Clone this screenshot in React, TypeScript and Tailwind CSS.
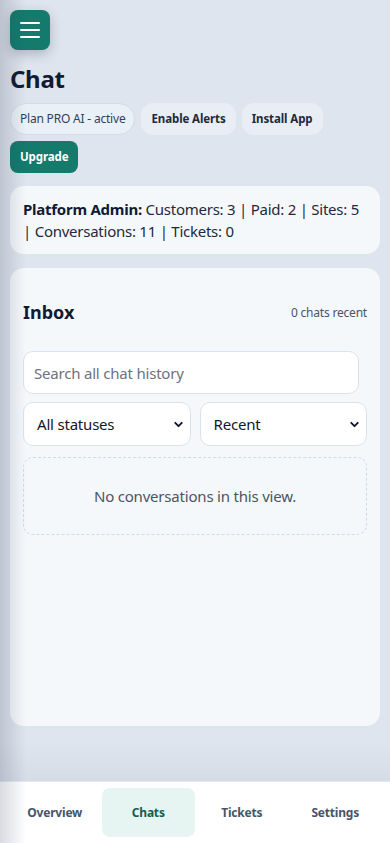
import { ChevronDown } from "lucide-react";

const tabs = ["Overview", "Chats", "Tickets", "Settings"];

export default function App() {
  return (
    <div
      className="relative flex h-[843px] flex-col overflow-hidden bg-[#dfe5ee] text-[#0f1b33]"
      style={{ fontFamily: '"Noto Sans", "Open Sans", sans-serif' }}
    >
      {/* main column */}
      <div className="flex-1 px-[10px] pt-[10px]">
        <button className="flex h-10 w-10 flex-col items-center justify-center gap-[5px] rounded-lg bg-[#137a6c] shadow-[0_4px_12px_rgba(15,40,60,0.25)]">
          <span className="h-[2px] w-5 rounded bg-white" />
          <span className="h-[2px] w-5 rounded bg-white" />
          <span className="h-[2px] w-5 rounded bg-white" />
        </button>

        <h1 className="mt-[14px] text-[24px] leading-[30px] font-bold tracking-[-0.3px]">Chat</h1>

        <div className="mt-[9px] flex flex-wrap gap-[6px]">
          <span className="flex h-8 items-center rounded-full border border-[#d3dbe6] bg-[#eaf0f7] px-[9px] text-[12px] tracking-[-0.2px] text-[#334155]">
            Plan PRO AI - active
          </span>
          <button className="h-8 rounded-xl bg-[#e9eef6] px-[10px] text-[11.5px] font-bold tracking-[-0.1px] text-[#1e293b]">
            Enable Alerts
          </button>
          <button className="h-8 rounded-xl bg-[#e9eef6] px-[10px] text-[11.5px] font-bold tracking-[-0.1px] text-[#1e293b]">
            Install App
          </button>
          <button className="h-8 rounded-lg bg-[#137a6c] px-[10px] text-[11.5px] font-bold tracking-[-0.1px] text-white">
            Upgrade
          </button>
        </div>

        <div className="mt-[13px] rounded-[14px] bg-[#f5f8fb] px-[13px] py-[12px] text-[15px] leading-[22px] tracking-[-0.25px] text-[#1e293b]">
          <span className="font-bold text-[#0f1b33]">Platform Admin:</span> Customers: 3 | Paid: 2 | Sites: 5 |
          Conversations: 11 | Tickets: 0
        </div>

        <div className="mt-[14px] h-[458px] rounded-[14px] bg-[#f5f8fb] px-[13px] pt-[31px]">
          <div className="flex items-center justify-between">
            <h2 className="text-[18px] font-bold text-[#0f1b33]">Inbox</h2>
            <span className="text-[12px] tracking-[-0.2px] text-[#475569]">0 chats recent</span>
          </div>

          <input
            placeholder="Search all chat history"
            className="mt-[25px] h-[43px] w-[336px] rounded-[10px] border border-[#dbe2ea] bg-white px-[10px] text-[15px] tracking-[-0.2px] placeholder:text-[#6b7280] outline-none"
          />

          <div className="mt-[8px] grid grid-cols-2 gap-[9px]">
            {["All statuses", "Recent"].map((s) => (
              <div
                key={s}
                className="flex h-[44px] items-center justify-between rounded-[10px] border border-[#dbe2ea] bg-white pr-[5px] pl-[13px] text-[15px] tracking-[-0.2px] text-[#111827]"
              >
                <span>{s}</span>
                <ChevronDown className="h-[13px] w-[13px] text-[#111827]" strokeWidth={3.5} />
              </div>
            ))}
          </div>

          <div className="mt-[11px] flex h-[78px] items-center justify-center rounded-[10px] border border-dashed border-[#d1d9e2] text-[15px] tracking-[-0.2px] text-[#4b5563]">
            No conversations in this view.
          </div>
        </div>
      </div>

      {/* bottom nav */}
      <nav className="grid h-[62px] grid-cols-4 border-t border-[#e5e9ef] bg-white px-2 pt-[6px] pb-[6px]">
        {tabs.map((t) => (
          <div
            key={t}
            className={`flex items-center justify-center rounded-lg text-[12px] font-bold tracking-[-0.2px] ${
              t === "Chats" ? "bg-[#e6f4f2] text-[#12604f]" : "text-[#475569]"
            }`}
          >
            {t}
          </div>
        ))}
      </nav>

      {/* edge shadows */}
      <div className="pointer-events-none absolute inset-y-0 left-0 w-[26px] bg-gradient-to-r from-[rgba(40,55,80,0.18)] to-transparent" />
      <div className="pointer-events-none absolute bottom-[62px] left-0 right-0 h-[40px] bg-gradient-to-b from-transparent to-[rgba(60,80,110,0.06)]" />
    </div>
  );
}
